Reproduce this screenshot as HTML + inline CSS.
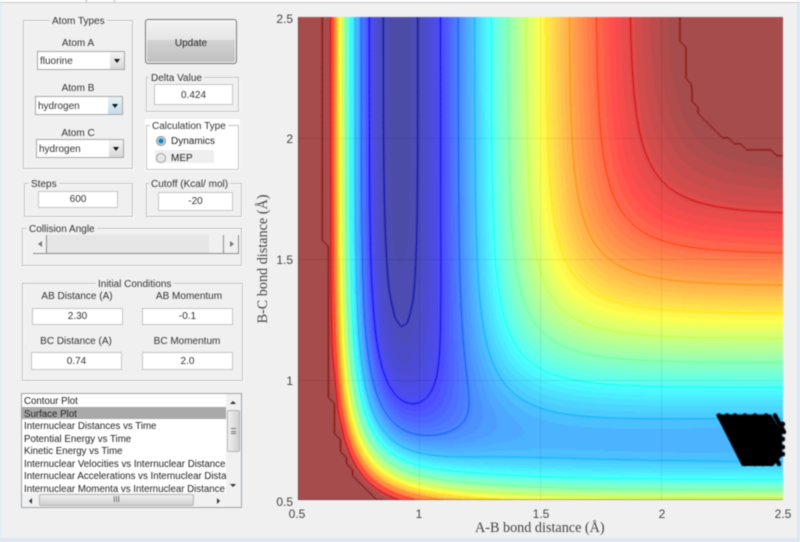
<!DOCTYPE html>
<html><head><meta charset="utf-8"><style>
html,body{margin:0;padding:0;background:#f0f0f0}
#w{position:relative;width:800px;height:542px;overflow:hidden;background:#f0f0f0;font-family:"Liberation Sans",sans-serif;font-size:10px;color:#333;filter:blur(.4px)}
#w div{position:absolute;box-sizing:border-box}
.box{border:1px solid #c4c4c4;box-shadow:inset 1px 1px 0 #fbfbfb,1px 1px 0 #fbfbfb}
.t{white-space:nowrap;line-height:12px;background:#f0f0f0;padding:0 2px}
.c{white-space:nowrap;line-height:12px;text-align:center;transform:translateX(-50%)}
.in{background:#fff;border:1px solid #c6c6c6;text-align:center;line-height:17px;font-size:10px;white-space:nowrap}
.sel{background:#fff;border:1px solid #a8a8a8;line-height:20px;padding-left:2px;font-size:10px}
.sb{right:0;top:0;bottom:0;width:14px;background:linear-gradient(#f4f4f4,#d8d8d8)}
.ar{width:0;height:0;border-left:3.5px solid transparent;border-right:3.5px solid transparent;border-top:4px solid #111;left:4px;top:7px}
.tk{font-size:12px;line-height:14px;color:#444;white-space:nowrap}
.sf{font-family:"Liberation Serif",serif;font-size:14.2px;line-height:16px;color:#444;white-space:nowrap}
.li{left:1px;width:204px;height:12.5px;line-height:15px;font-size:9.7px;white-space:nowrap;overflow:hidden;padding-left:1px;color:#222}
</style></head><body><div id="w">
<div style="left:0;top:0;width:800px;height:3px;background:#fff;border-bottom:1px solid #c8c8c8"></div>
<div style="left:86px;top:0;width:1px;height:3px;background:#bbb"></div>
<div style="left:114px;top:0;width:1px;height:3px;background:#bbb"></div>
<div style="left:0;top:4px;width:2px;height:538px;background:#e2ecf7"></div>
<div style="left:797px;top:4px;width:3px;height:538px;background:#dbe7f5"></div>
<div style="left:0;top:538px;width:800px;height:4px;background:#dbe7f5"></div>

<div class="box" style="left:23px;top:20px;width:110px;height:149px"></div>
<div class="t" style="left:50px;top:16px">Atom Types</div>
<div class="c" style="left:78px;top:38px">Atom A</div>
<div class="sel" style="left:37px;top:51px;width:88px;height:19px">fluorine<div class="sb"><div class="ar"></div></div></div>
<div class="c" style="left:78px;top:83px">Atom B</div>
<div class="sel" style="left:35px;top:96px;width:88px;height:19px">hydrogen<div class="sb" style="background:linear-gradient(#e6f1f8,#c6dbe8)"><div class="ar"></div></div></div>
<div class="c" style="left:78px;top:128px">Atom C</div>
<div class="sel" style="left:36px;top:139px;width:88px;height:19px">hydrogen<div class="sb"><div class="ar"></div></div></div>

<div style="left:145px;top:19px;width:92px;height:45px;border:1px solid #757575;border-radius:3px;background:linear-gradient(#f2f2f2 0,#e6e6e6 46%,#d3d3d3 47%,#bfbfbf 100%);box-shadow:inset 0 0 0 1px #f6f6f6;text-align:center;line-height:47px;color:#222">Update</div>

<div class="box" style="left:146px;top:77px;width:93px;height:35px"></div>
<div class="t" style="left:149px;top:73px">Delta Value</div>
<div class="in" style="left:154px;top:84px;width:79px;height:21px;line-height:21px">0.424</div>

<div style="left:145px;top:119px;width:95px;height:52px;background:#fff"></div>
<div class="box" style="left:146px;top:125px;width:93px;height:45px;box-shadow:none"></div>
<div class="t" style="left:150px;top:121px;background:#fff">Calculation Type</div>
<div style="left:155px;top:150px;width:59px;height:13px;background:#efefef"></div>
<div style="left:156px;top:136px;width:10px;height:10px;border-radius:50%;border:1px solid #8a8a8a;background:radial-gradient(#0a72b8 0,#1c86c4 35%,#cfe3ee 60%,#eee 100%)"></div>
<div style="left:156px;top:153px;width:10px;height:10px;border-radius:50%;border:1px solid #9a9a9a;background:radial-gradient(#e0e0e0,#f4f4f4)"></div>
<div style="left:171px;top:136px;line-height:12px;color:#222">Dynamics</div>
<div style="left:171px;top:153px;line-height:12px;color:#222">MEP</div>

<div class="box" style="left:24px;top:183px;width:109px;height:34px"></div>
<div class="t" style="left:29px;top:179px">Steps</div>
<div class="in" style="left:38px;top:191px;width:80px;height:17px;line-height:16px">600</div>

<div class="box" style="left:146px;top:183px;width:96px;height:34px"></div>
<div class="t" style="left:149px;top:179px">Cutoff (Kcal/ mol)</div>
<div class="in" style="left:158px;top:192px;width:75px;height:19px">-20</div>

<div class="box" style="left:22px;top:228px;width:220px;height:38px"></div>
<div class="t" style="left:27px;top:224px">Collision Angle</div>
<div style="left:33px;top:235px;width:206px;height:19px;background:#e6e6e6;border-bottom:1px solid #8c8c8c"></div>
<div style="left:33px;top:235px;width:14px;height:19px;background:#f0f0f0;border-right:1px solid #8c8c8c;border-bottom:1px solid #8c8c8c"></div>
<div style="left:38px;top:241px;width:0;height:0;border-top:3.5px solid transparent;border-bottom:3.5px solid transparent;border-right:4px solid #777"></div>
<div style="left:209px;top:235px;width:15px;height:19px;background:#f0f0f0;border-right:1px solid #8c8c8c;border-bottom:1px solid #8c8c8c"></div>
<div style="left:224px;top:235px;width:15px;height:19px;background:#f0f0f0;border-right:1px solid #8c8c8c;border-bottom:1px solid #8c8c8c"></div>
<div style="left:230px;top:241px;width:0;height:0;border-top:3.5px solid transparent;border-bottom:3.5px solid transparent;border-left:4px solid #777"></div>

<div class="box" style="left:22px;top:283px;width:221px;height:98px"></div>
<div class="t" style="left:96px;top:279px">Initial Conditions</div>
<div class="c" style="left:77px;top:291px">AB Distance (A)</div>
<div class="c" style="left:189px;top:291px">AB Momentum</div>
<div class="in" style="left:32px;top:308px;width:91px;height:17px;line-height:16px">2.30</div>
<div class="in" style="left:142px;top:308px;width:91px;height:17px;line-height:16px">-0.1</div>
<div class="c" style="left:76px;top:336px">BC Distance (A)</div>
<div class="c" style="left:187px;top:336px">BC Momentum</div>
<div class="in" style="left:31px;top:352px;width:91px;height:18px;line-height:17px">0.74</div>
<div class="in" style="left:142px;top:352px;width:91px;height:18px;line-height:17px">2.0</div>

<div style="left:21px;top:393px;width:221px;height:115px;background:#fff;border:1px solid #9aa3ad;overflow:hidden">
<div style="left:0;top:12.5px;width:204px;height:12.5px;background:#a9a9a9"></div>
<div class="li" style="top:0">Contour Plot</div>
<div class="li" style="top:12.5px">Surface Plot</div>
<div class="li" style="top:25px">Internuclear Distances vs Time</div>
<div class="li" style="top:37.5px">Potential Energy vs Time</div>
<div class="li" style="top:50px">Kinetic Energy vs Time</div>
<div class="li" style="top:62.5px">Internuclear Velocities vs Internuclear Distance</div>
<div class="li" style="top:75px">Internuclear Accelerations vs Internuclear Distance</div>
<div class="li" style="top:87.5px">Internuclear Momenta vs Internuclear Distance</div>
<div style="left:204px;top:0;width:15px;height:113px;background:#f1f1f1"></div>
<div style="left:0;top:99px;width:219px;height:14px;background:#f1f1f1"></div>
<div style="left:205px;top:16px;width:13px;height:42px;background:linear-gradient(90deg,#f0f0f0,#d0d0d0);border:1px solid #b5b5b5;border-radius:2px"></div>
<div style="left:209px;top:34px;width:5px;height:6px;border-top:1px solid #777;border-bottom:1px solid #777"></div>
<div style="left:209px;top:36.5px;width:5px;height:1px;background:#777"></div>
<div style="left:208px;top:7px;width:0;height:0;border-left:3px solid transparent;border-right:3px solid transparent;border-bottom:3px solid #333"></div>
<div style="left:208px;top:90px;width:0;height:0;border-left:3px solid transparent;border-right:3px solid transparent;border-top:3px solid #333"></div>
<div style="left:17px;top:100px;width:155px;height:12px;background:linear-gradient(#f0f0f0,#cfcfcf);border:1px solid #b5b5b5;border-radius:2px;text-align:center;line-height:9px;font-size:8px;color:#555">III</div>
<div style="left:7px;top:104px;width:0;height:0;border-top:3px solid transparent;border-bottom:3px solid transparent;border-right:3px solid #333"></div>
<div style="left:195px;top:104px;width:0;height:0;border-top:3px solid transparent;border-bottom:3px solid transparent;border-left:3px solid #333"></div>
</div>

<canvas id="c" width="800" height="542" style="position:absolute;left:0;top:0"></canvas>

<div class="tk" style="right:507px;top:12px">2.5</div>
<div class="tk" style="right:507px;top:132px">2</div>
<div class="tk" style="right:507px;top:253px">1.5</div>
<div class="tk" style="right:507px;top:374px">1</div>
<div class="tk" style="right:507px;top:495px">0.5</div>
<div class="tk c" style="left:297px;top:507px">0.5</div>
<div class="tk c" style="left:419px;top:507px">1</div>
<div class="tk c" style="left:541px;top:507px">1.5</div>
<div class="tk c" style="left:662px;top:507px">2</div>
<div class="tk c" style="left:783px;top:507px">2.5</div>
<div class="sf" style="left:475px;top:520px">A-B bond distance (Å)</div>
<div class="sf" style="left:263px;top:259px;transform:translate(-50%,-50%) rotate(-90deg)">B-C bond distance (Å)</div>
</div>
<script>
(function(){
var X0=298,Y0=17,W=485,H=483;
var D1=134,B1=2.22,R1=0.917,S1=0.167,D2=104,B2=1.94,R2=0.74,S2=0.215,S3=0.167,OFF=0.7;
function qj(r,D,b,re,S){var e=Math.exp(-b*(r-re)),k=D/(4*(1+S));
 return [k*((3+S)*e*e-(2+6*S)*e),k*((1+3*S)*e*e-(6+2*S)*e)];}
function V(a,b){var p=qj(a,D1,B1,R1,S1),q=qj(b,D2,B2,R2,S2),r=qj(a+b,D1,B1,R1,S3);
 var J1=p[1],J2=q[1],J3=r[1];
 return OFF+p[0]+q[0]+r[0]-Math.sqrt(0.5*((J1-J2)*(J1-J2)+(J2-J3)*(J2-J3)+(J3-J1)*(J3-J1)));}
var N=80,CAP=-20,MIN=-134,M=[],i,j;
for(j=0;j<=N;j++){M[j]=[];for(i=0;i<=N;i++){
 var v=V(0.5+2*i/N,0.5+2*j/N);M[j][i]=Math.min(v,CAP);}}
function cl(x){return Math.max(0,Math.min(1,x));}
function jet(t){return [cl(1.5-Math.abs(4*t-3)),cl(1.5-Math.abs(4*t-2)),cl(1.5-Math.abs(4*t-1))];}
var cv=document.getElementById('c'),g=cv.getContext('2d');
var im=g.createImageData(W,H),d=im.data;
for(var py=0;py<H;py++){for(var px=0;px<W;px++){
 var fx=px/(W-1)*N,fy=(H-1-py)/(H-1)*N;
 var ix=Math.min(N-1,Math.floor(fx)),iy=Math.min(N-1,Math.floor(fy)),ax=fx-ix,ay=fy-iy;
 var val=(M[iy][ix]*(1-ax)+M[iy][ix+1]*ax)*(1-ay)+(M[iy+1][ix]*(1-ax)+M[iy+1][ix+1]*ax)*ay;
 var t=(val-MIN)/(CAP-MIN),idx=Math.min(63,Math.max(0,Math.floor(t*64)));
 var c=jet(idx/63),o=(py*W+px)*4;
 d[o]=255*(c[0]*.7+.3);d[o+1]=255*(c[1]*.7+.3);d[o+2]=255*(c[2]*.7+.3);d[o+3]=255;
}}
g.putImageData(im,X0,Y0);
function PX(i){return X0+i/N*W;}
function PY(j){return Y0+H-j/N*H;}
g.save();g.beginPath();g.rect(X0,Y0,W,H);g.clip();
g.lineWidth=1;
for(var k=0;k<12;k++){
 var L=-130+10*k;if(k==11)L=-20.001;
 var c=jet((L-MIN)/(CAP-MIN));
 g.strokeStyle='rgba('+Math.round(c[0]*255)+','+Math.round(c[1]*255)+','+Math.round(c[2]*255)+',1)';
 g.beginPath();
 for(j=0;j<N;j++)for(i=0;i<N;i++){
  var a=M[j][i],b=M[j][i+1],cc=M[j+1][i+1],dd=M[j+1][i],P=[];
  if((a<L)!=(b<L))P.push([PX(i+(L-a)/(b-a)),PY(j)]);
  if((b<L)!=(cc<L))P.push([PX(i+1),PY(j+(L-b)/(cc-b))]);
  if((cc<L)!=(dd<L))P.push([PX(i+(L-dd)/(cc-dd)),PY(j+1)]);
  if((dd<L)!=(a<L))P.push([PX(i),PY(j+(L-a)/(dd-a))]);
  if(P.length>=2){g.moveTo(P[0][0],P[0][1]);g.lineTo(P[1][0],P[1][1]);}
  if(P.length==4){g.moveTo(P[2][0],P[2][1]);g.lineTo(P[3][0],P[3][1]);}
 }
 g.stroke();
}
g.restore();
g.strokeStyle='rgba(0,0,0,.07)';g.lineWidth=1;g.beginPath();
[419,540,661].forEach(function(x){g.moveTo(x+.5,Y0);g.lineTo(x+.5,Y0+H);});
[138,259,380].forEach(function(y){g.moveTo(X0,y+.5);g.lineTo(X0+W,y+.5);});
g.stroke();
g.strokeStyle='rgba(40,40,40,.4)';g.beginPath();g.moveTo(X0+.5,Y0);g.lineTo(X0+.5,Y0+H-.5);g.lineTo(X0+W,Y0+H-.5);g.stroke();
/* trajectory */
g.fillStyle='#000';g.strokeStyle='#000';g.lineCap='round';
g.beginPath();g.moveTo(716,414.5);g.lineTo(771,414.5);g.lineTo(782,432);g.lineTo(782,456);g.lineTo(773,466);g.lineTo(742,466);g.closePath();g.fill();
g.lineWidth=4.5;
[719,727,735,745,755,766,775].forEach(function(x){g.beginPath();g.moveTo(x,415.5);g.lineTo(x+9,432);g.stroke();});
[424,431,439,447,454].forEach(function(y){g.beginPath();g.arc(782.5,y,2.6,0,7);g.fill();});
[745,755,763,771,779].forEach(function(x){g.beginPath();g.moveTo(x-8,450);g.lineTo(x,464);g.stroke();});
})();
</script>
</body></html>
